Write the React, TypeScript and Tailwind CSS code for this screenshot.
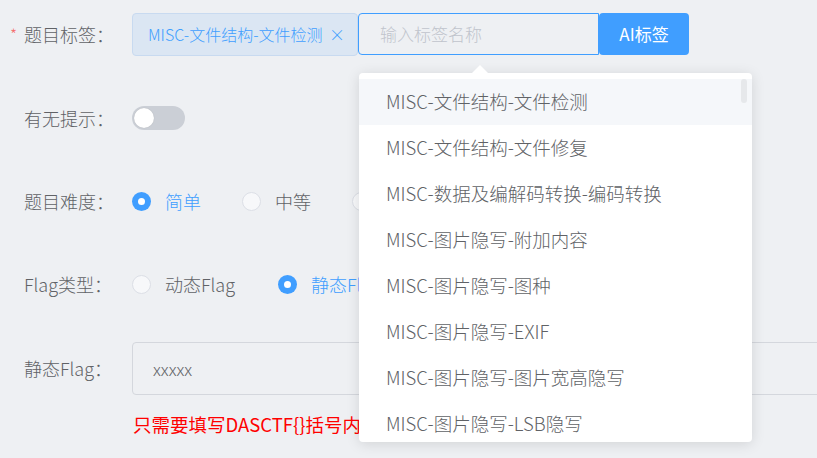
import { useState } from "react";

const tagOptions = [
  "MISC-文件结构-文件检测",
  "MISC-文件结构-文件修复",
  "MISC-数据及编解码转换-编码转换",
  "MISC-图片隐写-附加内容",
  "MISC-图片隐写-图种",
  "MISC-图片隐写-EXIF",
  "MISC-图片隐写-图片宽高隐写",
  "MISC-图片隐写-LSB隐写",
];

const Radio = ({ checked, label }: { checked: boolean; label: string }) => (
  <label className="flex items-center cursor-pointer">
    {checked ? (
      <span className="flex items-center justify-center w-[19px] h-[19px] rounded-full bg-[#409eff]">
        <span className="w-[7px] h-[7px] rounded-full bg-white" />
      </span>
    ) : (
      <span className="w-[19px] h-[19px] rounded-full border border-[#dcdfe6] bg-[#f7f8fa]" />
    )}
    <span
      className={`ml-[14px] text-[18px] ${
        checked ? "text-[#409eff]" : "text-[#606266]"
      }`}
    >
      {label}
    </span>
  </label>
);

const FormRow = ({
  label,
  required,
  className,
  children,
}: {
  label: string;
  required?: boolean;
  className?: string;
  children: React.ReactNode;
}) => (
  <div className={`flex items-center ${className ?? ""}`}>
    <div className="relative w-[132px] shrink-0 pl-[24px] text-[18px] text-[#606266]">
      {required && (
        <span className="absolute left-[10px] top-[1px] text-[16px] text-[#f56c6c]">
          *
        </span>
      )}
      {label}
    </div>
    {children}
  </div>
);

const App = () => {
  const [difficulty, setDifficulty] = useState("简单");
  const [flagType] = useState("静态Flag");

  return (
    <div className="relative w-[817px] h-[458px] overflow-hidden bg-[#eef0f3] font-light font-['Noto_Sans_CJK_SC','Noto_Sans',sans-serif]">
      <div className="flex flex-col pt-[12px]">
        <FormRow label="题目标签：" required className="h-[44px]">
          <div className="flex items-center">
            <div className="flex items-center h-[43px] w-[226px] rounded-[4px] border border-[#c8daf0] bg-[#dbe6f3] pl-[15px] pr-[12px] text-[16px] text-[#409eff]">
              <span className="flex-1">MISC-文件结构-文件检测</span>
              <span className="text-[16px] leading-none">×</span>
            </div>
            <div className="relative">
              <div className="flex items-center h-[42px] w-[241px] rounded-l-[4px] border border-[#409eff] pl-[21px] text-[17px] text-[#c0c4cc]">
                输入标签名称
              </div>
              <div className="absolute left-[1px] top-[60px] z-10 w-[393px] h-[369px] rounded-[4px] bg-white shadow-[0_2px_14px_rgba(0,0,0,0.12)]">
                <div className="absolute left-[113px] -top-[8px] w-0 h-0 border-x-[8px] border-x-transparent border-b-[8px] border-b-white" />
                <div className="h-full overflow-hidden rounded-[4px] pt-[6px]">
                  {tagOptions.map((opt, i) => (
                    <div
                      key={opt}
                      className={`flex items-center h-[46px] pl-[27px] text-[18.5px] text-[#606266] ${
                        i === 0 ? "bg-[#f5f7fa]" : ""
                      }`}
                    >
                      {opt}
                    </div>
                  ))}
                </div>
                <div className="absolute right-[5px] top-[6px] w-[6px] h-[24px] rounded-full bg-[#e6e8eb]" />
              </div>
            </div>
            <button className="h-[42px] w-[90px] rounded-[4px] bg-[#409eff] text-[17px] font-normal text-white">
              AI标签
            </button>
          </div>
        </FormRow>

        <FormRow label="有无提示：" className="h-[44px] mt-[40px]">
          <div className="flex items-center w-[53px] h-[24px] rounded-full bg-[#cbcfd6] px-[2px]">
            <span className="w-[20px] h-[20px] rounded-full bg-white shadow-[0_0_1px_rgba(0,0,0,0.2)]" />
          </div>
        </FormRow>

        <FormRow label="题目难度：" className="h-[44px] mt-[39px]">
          <div className="flex items-center gap-[41px]">
            {["简单", "中等", "困难"].map((d) => (
              <div key={d} onClick={() => setDifficulty(d)}>
                <Radio checked={difficulty === d} label={d} />
              </div>
            ))}
          </div>
        </FormRow>

        <FormRow label="Flag类型：" className="h-[44px] mt-[39px]">
          <div className="flex items-center gap-[43px]">
            {["动态Flag", "静态Flag"].map((t) => (
              <Radio key={t} checked={flagType === t} label={t} />
            ))}
          </div>
        </FormRow>

        <FormRow label="静态Flag：" className="h-[53px] mt-[36px]">
          <div className="flex items-center h-[53px] w-[700px] shrink-0 rounded-[4px] border border-[#d4d7dd] pl-[20px] text-[17px] text-[#606266]">
            xxxxx
          </div>
        </FormRow>

        <div className="mt-[18px] pl-[133px] text-[18.5px] leading-[22px] font-normal text-[#ff0000]">
          只需要填写DASCTF{"{}"}括号内的内容即可
        </div>
      </div>
    </div>
  );
};

export default App;
